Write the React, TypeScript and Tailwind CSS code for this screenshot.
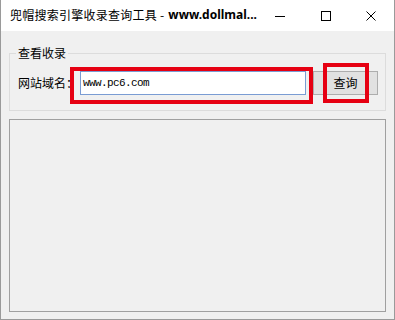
import React from 'react';

const CJK = "'Noto Sans CJK SC', 'Noto Sans', sans-serif";

/* ── title bar caption buttons ── */
const CaptionButtons = () => (
  <div className="absolute top-0 right-0 h-[31px] flex">
    <div className="w-[46px] h-full flex items-center justify-center pl-[2px]">
      <svg width="10" height="10" viewBox="0 0 10 10">
        <line x1="0" y1="5.5" x2="10" y2="5.5" stroke="#000" strokeWidth="1" />
      </svg>
    </div>
    <div className="w-[46px] h-full flex items-center justify-center pl-[2px]">
      <svg width="10" height="10" viewBox="0 0 10 10">
        <rect x="0.5" y="0.5" width="9" height="9" fill="none" stroke="#000" strokeWidth="1" />
      </svg>
    </div>
    <div className="w-[46px] h-full flex items-center justify-center">
      <svg width="10" height="10" viewBox="0 0 10 10">
        <path d="M0.5 0.5 L9.5 9.5 M9.5 0.5 L0.5 9.5" stroke="#000" strokeWidth="1" />
      </svg>
    </div>
  </div>
);

export default function App() {
  return (
    <div
      className="relative w-[395px] h-[320px] bg-[#f0f0f0] border-x border-b border-[#9a9a9a] overflow-hidden text-black"
      style={{ fontFamily: CJK }}
    >
      {/* ── Title bar ── */}
      <div className="h-[31px] bg-white flex items-center pl-[9px] pb-[1px] text-[12px] leading-none">
        <span className="tracking-[0.25px]">兜帽搜索引擎收录查询工具 - </span>
        <span className="font-bold ml-[4px]" style={{ fontFamily: "'Noto Sans', sans-serif" }}>
          www.dollmal...
        </span>
      </div>
      <CaptionButtons />

      {/* ── Client area ── */}
      <div className="flex flex-col px-[8px]">
        <fieldset className="mt-[15px] w-[377px] border border-[#dcdcdc] pt-[11px] pb-[15px]">
          <legend className="ml-[6px] px-[2px] text-[12px] leading-[14px]">查看收录</legend>
          <div className="flex items-center pl-[8px]">
            <span className="text-[12px] w-[62px]">网站域名：</span>
            <div className="w-[226px] h-[24px] bg-white border border-[#7a9cd3] flex items-center pl-[2px]">
              <span
                className="text-[11px] tracking-[-0.6px]"
                style={{ fontFamily: "'Liberation Mono', monospace" }}
              >
                www.pc6.com
              </span>
            </div>
            <div className="ml-[7px] w-[65px] h-[24px] bg-[#e1e1e1] border border-[#adadad] flex items-center justify-center text-[12px]">
              查询
            </div>
          </div>
        </fieldset>

        <div className="mt-[8px] w-[377px] h-[193px] border border-[#a0a0a0] bg-[#f0f0f0]" />
      </div>

      {/* ── Red annotation boxes ── */}
      <div className="absolute left-[69px] top-[67px] w-[243px] h-[37px] border-[4px] border-[#e60012]" />
      <div className="absolute left-[322px] top-[63px] w-[46px] h-[40px] border-[4px] border-[#e60012]" />
    </div>
  );
}
